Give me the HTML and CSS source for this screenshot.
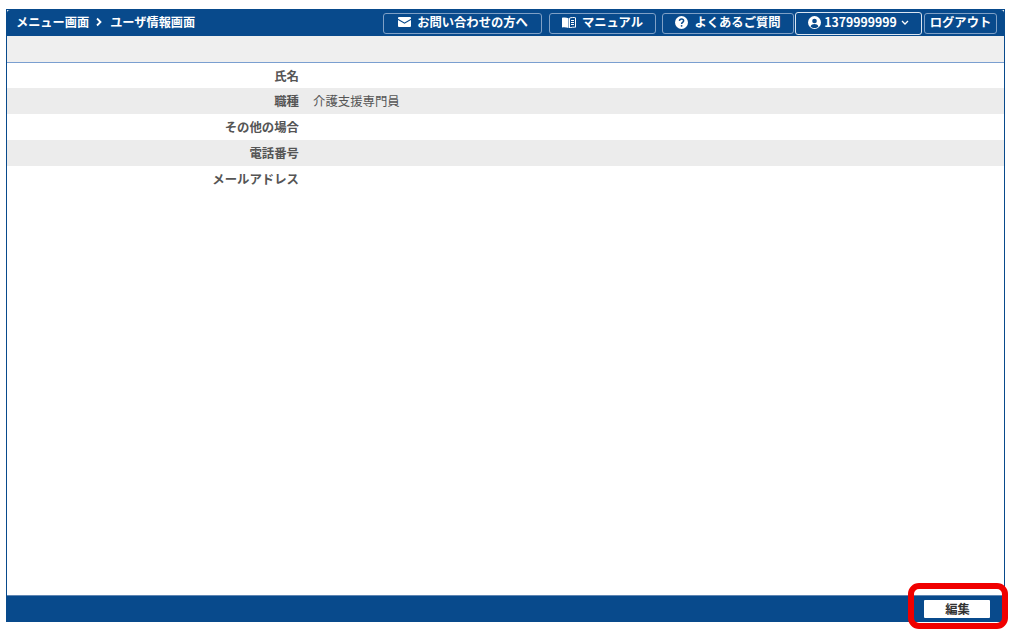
FILE: index.html
```html
<!DOCTYPE html>
<html lang="ja">
<head>
<meta charset="utf-8">
<title>ユーザ情報画面</title>
<link rel="stylesheet" href="styles.css">
</head>
<body>
<div class="frame">
  <header class="header">
    <div class="crumbs"><span>メニュー画面</span><svg class="crumb-sep" viewBox="0 0 8 10" width="8" height="10"><path d="M2 1.500 5.500 5 2 8.500" fill="none" stroke="#fff" stroke-width="1.800"/></svg><span>ユーザ情報画面</span></div>
    <nav class="nav">
      <a class="btn btn-contact"><svg class="ico" viewBox="0 0 13 10" width="13" height="10"><path d="M1 0h11a1 1 0 0 1 1 1v.8L6.500 5.600 0 1.800V1a1 1 0 0 1 1-1z M0 3 6.500 6.800 13 3v6a1 1 0 0 1-1 1H1a1 1 0 0 1-1-1z" fill="#fff"/></svg>お問い合わせの方へ</a>
      <a class="btn btn-manual"><svg class="ico" viewBox="0 0 14 11" width="14" height="11"><path d="M0 .8C2 .2 4.500 .3 6.500 1.200V11C4.500 10.200 2 10 0 10.400z" fill="#fff"/><path d="M7.500 1.200C9.500 .3 12 .2 13.500 .8v9.400C12 10 9.500 10.200 7.500 11z" fill="none" stroke="#fff" stroke-width="1"/><path d="M9 3.500h3M9 5.500h3M9 7.500h3" stroke="#fff" stroke-width="1"/></svg>マニュアル</a>
      <a class="btn btn-faq"><svg class="ico" viewBox="0 0 14 14" width="13" height="13"><circle cx="7" cy="7" r="7" fill="#fff"/><path d="M4.800 5.300C4.900 3.900 5.900 3.300 7.100 3.300c1.300 0 2.200.8 2.200 1.900 0 1.800-2.200 1.700-2.200 3.400" fill="none" stroke="#084a8c" stroke-width="1.600"/><circle cx="7.100" cy="10.600" r="1" fill="#084a8c"/></svg>よくあるご質問</a>
      <a class="btn btn-user"><svg class="ico-user" viewBox="0 0 14 14" width="13" height="13"><circle cx="7" cy="7" r="7" fill="#fff"/><circle cx="7" cy="5.400" r="2.500" fill="#084a8c"/><path d="M2.800 11.200C3.500 9.400 5 8.700 7 8.700s3.500.7 4.200 2.500C10 12.400 8.600 13 7 13s-3-.6-4.200-1.800z" fill="#084a8c"/></svg>1379999999<svg class="caret" viewBox="0 0 8 5" width="8" height="5"><path d="M1 1 4 4 7 1" fill="none" stroke="#fff" stroke-width="1.300"/></svg></a>
      <a class="btn btn-logout">ログアウト</a>
    </nav>
  </header>
  <div class="toolbar"></div>
  <main class="content">
    <div class="row"><div class="label">氏名</div><div class="value"></div></div>
    <div class="row"><div class="label">職種</div><div class="value">介護支援専門員</div></div>
    <div class="row"><div class="label">その他の場合</div><div class="value"></div></div>
    <div class="row"><div class="label">電話番号</div><div class="value"></div></div>
    <div class="row"><div class="label">メールアドレス</div><div class="value"></div></div>
  </main>
  <footer class="footer"><button class="edit" type="button">編集</button></footer>
</div>
<div class="highlight"></div>
</body>
</html>
```
FILE: styles.css
```css
html, body { margin: 0; padding: 0; background: #fff; }
body {
  width: 1015px;
  height: 637px;
  padding: 9px 10px 0 6px;
  box-sizing: border-box;
  position: relative;
  overflow: hidden;
  font-family: "Noto Sans CJK JP", "Noto Sans", sans-serif;
  font-size: 12.4px;
}
.frame {
  height: 613px;
  box-sizing: border-box;
  border: 1px solid #084a8c;
  border-bottom: 0;
  display: flex;
  flex-direction: column;
}
.header {
  height: 26px;
  box-sizing: border-box;
  flex: none;
  background: #084a8c;
  border-top-left-radius: 3px;
  border-top-right-radius: 3px;
  color: #fff;
  display: flex;
  align-items: center;
  justify-content: space-between;
  padding: 0 7px 0 9px;
}
.crumbs { display: flex; align-items: center; font-weight: 700; font-size: 12.2px; padding-bottom: 2px; }
.crumb-sep { margin: 0 7px 0 6px; }
.nav { display: flex; align-items: center; }
.btn {
  height: 21px;
  box-sizing: border-box;
  border: 1px solid #7fa0c6;
  border-radius: 3px;
  padding-bottom: 2px;
  display: flex;
  align-items: center;
  justify-content: center;
  font-weight: 700;
  font-size: 12.3px;
  color: #fff;
  white-space: nowrap;
}
.ico { margin-right: 6px; }
.ico-user { margin-right: 3px; }
.caret { margin-left: 4px; }
.btn-contact { width: 159px; margin-right: 7px; padding-left: 1px; }
.btn-manual { width: 107px; margin-right: 6px; }
.btn-faq { width: 132px; margin-right: 1px; }
.btn-user { width: 127px; height: 23px; border-color: #dbe6f2; margin-right: 2px; }
.btn-logout { width: 73px; }
.toolbar {
  height: 27px;
  box-sizing: border-box;
  flex: none;
  background: #efefef;
  border-bottom: 1px solid #7a9fd0;
}
.content { flex: 1; display: flex; flex-direction: column; }
.row {
  height: 26px;
  box-sizing: border-box;
  display: flex;
  align-items: center;
  color: #555;
  flex: none;
}
.row:first-child { height: 25px; }
.row:nth-child(even) { background: #ececec; }
.label { width: 292px; text-align: right; font-weight: 700; }
.value { margin-left: 14px; }
.footer {
  height: 27px;
  box-sizing: border-box;
  flex: none;
  background: #084a8c;
  border-top: 1px solid #5f86b3;
  display: flex;
  align-items: center;
  justify-content: flex-end;
  padding-right: 14px;
}
.edit {
  width: 66px;
  height: 18px;
  padding: 0 0 2px 1px;
  border: 0;
  border-radius: 1px;
  background: #fff;
  color: #333;
  font: 700 12.3px "Noto Sans CJK JP", sans-serif;
}
.highlight {
  position: absolute;
  left: 908px;
  top: 583px;
  width: 100px;
  height: 46px;
  box-sizing: border-box;
  border: 6px solid #f00000;
  border-radius: 11px;
}
```
